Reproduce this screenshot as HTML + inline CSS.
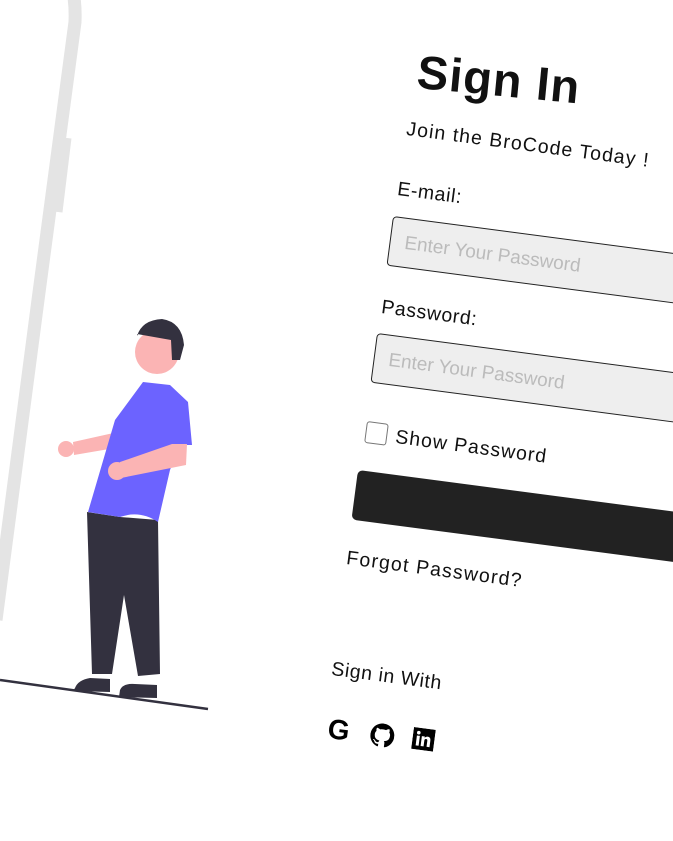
<!DOCTYPE html>
<html><head><meta charset="utf-8"><style>
html,body{margin:0;padding:0;background:#fff;width:673px;height:841px;overflow:hidden;position:relative;font-family:"Liberation Sans",sans-serif;color:#111}
.r{position:absolute;transform-origin:0 0;transform:rotate(7.5deg);white-space:nowrap}
.t{font-size:19.5px;letter-spacing:0.6px}
.in{border:1px solid #222;border-radius:4px;background:#eee;width:340px;height:50px;box-sizing:border-box;font-size:19px;color:#bbb;padding:14px 0 0 14px}
</style></head><body>
<svg width="673" height="841" style="position:absolute;left:0;top:0">
<path d="M70,-20 Q76,-2 75,22 L38,300 L-4,620" fill="none" stroke="#e4e4e4" stroke-width="13"/>
<path d="M67,138 L58,212" fill="none" stroke="#e4e4e4" stroke-width="9"/>
<line x1="0" y1="680" x2="208" y2="709" stroke="#33313f" stroke-width="2.5"/>
<path d="M87,512 L120,517 L158,520 L160,674 L138,676 L124,595 L112,674 L92,674 Z" fill="#33313f"/>
<path d="M75,688 Q78,680 90,678 L110,679 L110,692 L73,691 Z M120,690 Q123,683 135,684 L157,685 L157,698 L119,697 Z" fill="#33313f"/>
<path d="M118,432 L73,442 L74,455 L115,448 Z" fill="#fbb4b4"/><circle cx="66" cy="449" r="8" fill="#fbb4b4"/>
<path d="M143,382 L170,385 L188,402 L192,445 L180,445 L170,470 L158,522 Q140,510 120,517 L88,512 L115,420 Z" fill="#6c63ff"/>
<path d="M187,444 L172,444 L120,462 L121,478 L186,465 Z" fill="#fbb4b4"/><circle cx="117" cy="471" r="9" fill="#fbb4b4"/>
<circle cx="157" cy="352" r="22" fill="#fbb4b4"/>
<path d="M137,336 Q142,320 162,319 Q182,322 184,345 L180,360 L172,360 L171,340 L137,334 Z" fill="#33313f"/>
</svg>
<div class="r" style="left:420px;top:44px;font-size:47px;font-weight:bold;letter-spacing:1px;transform:rotate(5.5deg)">Sign In</div>
<div class="r t" style="left:408px;top:118px;letter-spacing:1.1px">Join the BroCode Today !</div>
<div class="r t" style="left:399px;top:178px">E-mail:</div>
<div class="r in" style="left:393px;top:216px">Enter Your Password</div>
<div class="r t" style="left:383px;top:296px">Password:</div>
<div class="r in" style="left:377px;top:333px">Enter Your Password</div>
<div class="r" style="left:367px;top:421px;width:22px;height:22px;border:1.5px solid #777;border-radius:3px;box-sizing:border-box"></div>
<div class="r t" style="left:397px;top:426px;letter-spacing:1px">Show Password</div>
<div class="r" style="left:358px;top:470px;width:400px;height:50px;background:#222;border-radius:5px"></div>
<div class="r t" style="left:348px;top:547px;letter-spacing:1.2px">Forgot Password?</div>
<div class="r t" style="left:333px;top:658px">Sign in With</div>
<div class="r" style="left:330px;top:713px;font-size:28px;font-weight:bold;color:#000">G</div>
<svg class="r" style="left:372px;top:722px" width="24" height="24" viewBox="0 0 16 16"><path fill="#000" d="M8 0C3.58 0 0 3.58 0 8c0 3.54 2.29 6.53 5.47 7.59.4.07.55-.17.55-.38v-1.34c-2.23.48-2.7-1.07-2.7-1.07-.36-.92-.89-1.17-.89-1.17-.73-.5.06-.49.06-.49.8.06 1.23.83 1.23.83.72 1.22 1.87.87 2.33.66.07-.52.28-.87.51-1.07-1.78-.2-3.64-.89-3.64-3.95 0-.87.31-1.59.82-2.15-.08-.2-.36-1.02.08-2.12 0 0 .67-.21 2.2.82a7.6 7.6 0 014 0c1.53-1.04 2.2-.82 2.2-.82.44 1.1.16 1.92.08 2.12.51.56.82 1.27.82 2.15 0 3.07-1.87 3.75-3.65 3.95.29.25.54.73.54 1.48v2.2c0 .21.15.46.55.38A8 8 0 0016 8c0-4.42-3.58-8-8-8z"/></svg>
<svg class="r" style="left:414px;top:727px" width="22" height="22" viewBox="0 0 22 22"><rect width="22" height="22" fill="#000"/><rect x="4" y="8" width="3" height="10" fill="#fff"/><circle cx="5.5" cy="5" r="1.8" fill="#fff"/><path d="M9 8h3v1.5c.6-1 1.6-1.7 3-1.7 2.3 0 3 1.5 3 3.7V18h-3v-6c0-1-.4-1.7-1.4-1.7S12 11 12 12v6H9z" fill="#fff"/></svg>
</body></html>
